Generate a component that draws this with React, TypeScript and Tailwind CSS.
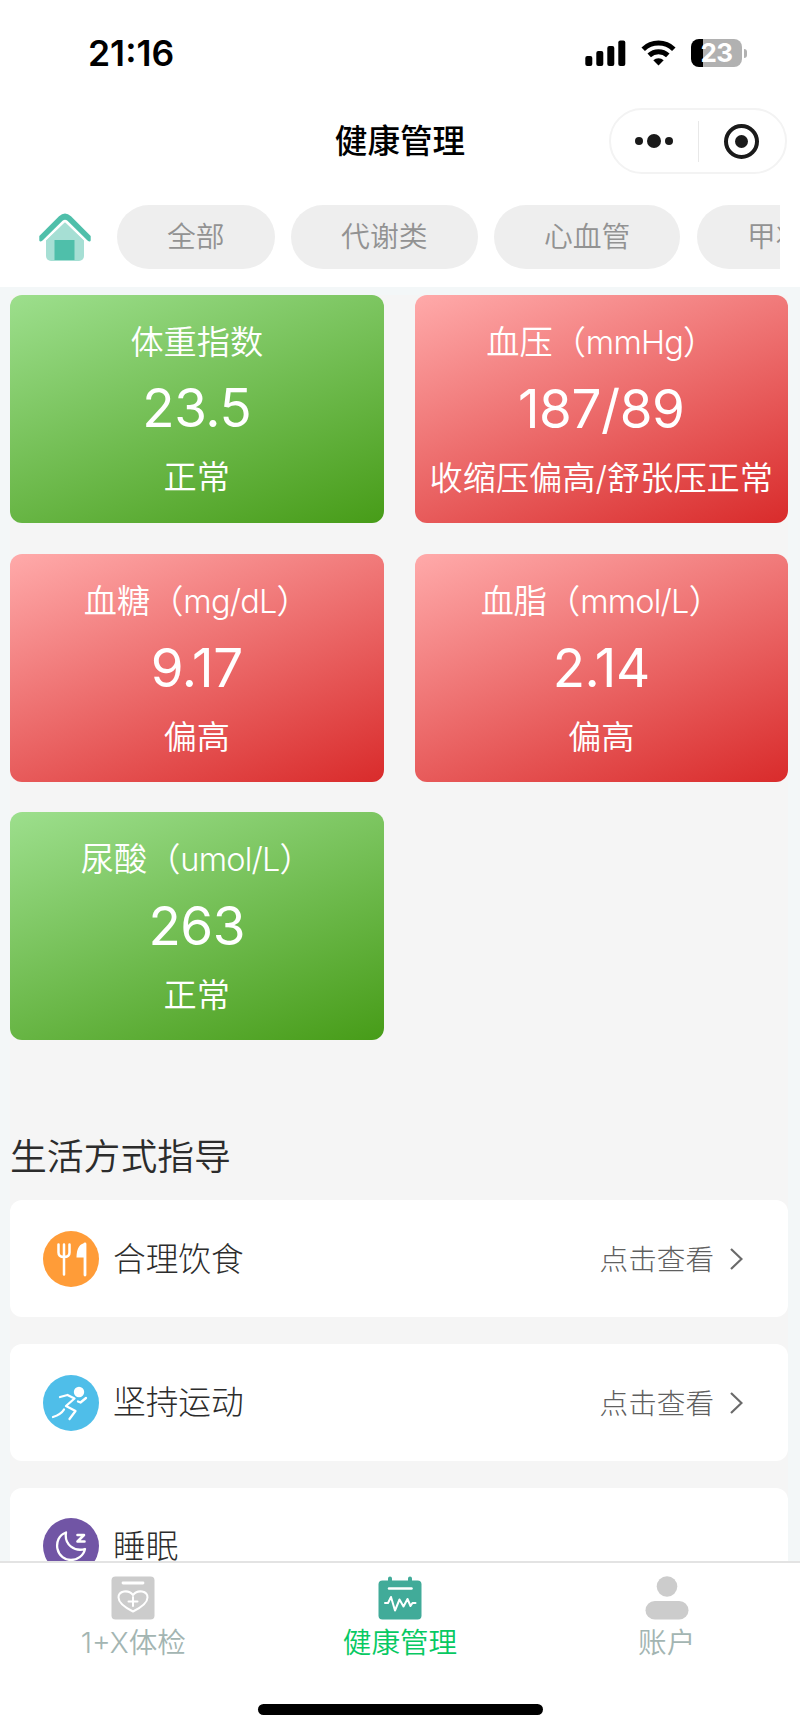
import type { ReactNode } from "react";

const categories = ["全部", "代谢类", "心血管", "甲状腺"];

const metrics = [
  { title: "体重指数", unit: "", value: "23.5", status: "正常", high: false },
  { title: "血压", unit: "mmHg", value: "187/89", status: "收缩压偏高/舒张压正常", high: true },
  { title: "血糖", unit: "mg/dL", value: "9.17", status: "偏高", high: true },
  { title: "血脂", unit: "mmol/L", value: "2.14", status: "偏高", high: true },
  { title: "尿酸", unit: "umol/L", value: "263", status: "正常", high: false },
];

function StatusBar() {
  return (
    <div className="flex h-[106px] items-center justify-between pl-[88px] pr-[53px]">
      <span className="pt-[2px] text-[35.5px] leading-none font-semibold">21:16</span>
      <div className="flex items-center gap-[15px]">
        <svg width="41" height="26" viewBox="0 0 41 26">
          <rect x="0.3" y="16" width="7" height="10" rx="2" />
          <rect x="11.3" y="11" width="7" height="15" rx="2" />
          <rect x="22.3" y="6" width="7" height="20" rx="2" />
          <rect x="33.3" y="0.5" width="7" height="25.5" rx="2" />
        </svg>
        <svg width="35" height="26" viewBox="0 0 35 26" fill="none" stroke="#000" strokeWidth="5">
          <path d="M2.2 9.2a22 22 0 0 1 30.6 0" />
          <path d="M8.2 15.4a13.4 13.4 0 0 1 18.6 0" />
          <path d="M17.5 25.5l-5.2-5.2a7.4 7.4 0 0 1 10.4 0z" fill="#000" stroke="none" />
        </svg>
        <div className="flex items-center gap-[2px]">
          <div className="flex h-7 w-[51px] items-center justify-center rounded-[8px] bg-linear-to-r from-black from-[23%] to-[#b1b1b1] to-[23%] text-[26px] leading-none font-bold tracking-[-0.5px] text-white">
            23
          </div>
          <div className="h-[9px] w-[3px] rounded-r-full bg-[#b1b1b1]" />
        </div>
      </div>
    </div>
  );
}

function NavBar() {
  return (
    <div className="grid h-[70px] grid-cols-[1fr_auto_1fr] items-center pr-[13px]">
      <div />
      <h1 className="pl-[13px] text-[32.6px] leading-none font-medium">健康管理</h1>
      <div className="flex h-[66px] w-[178px] items-center justify-self-end rounded-full border-2 border-[#f3f3f3]">
        <div className="flex flex-1 items-center justify-center gap-1">
          <i className="size-2 rounded-full bg-[#1a1a1a]" />
          <i className="size-[14px] rounded-full bg-[#1a1a1a]" />
          <i className="size-2 rounded-full bg-[#1a1a1a]" />
        </div>
        <div className="h-[41px] w-px bg-[#e8e8e8]" />
        <div className="flex flex-1 items-center justify-center">
          <div className="flex size-[35px] items-center justify-center rounded-full border-4 border-[#1a1a1a]">
            <i className="size-[13px] rounded-full bg-[#1a1a1a]" />
          </div>
        </div>
      </div>
    </div>
  );
}

function HomeIcon() {
  return (
    <svg className="shrink-0" width="52" height="50" viewBox="0 0 52 50">
      <path d="M26 10L45 28V44a5 5 0 0 1-5 5H12a5 5 0 0 1-5-5V28z" fill="#a6dfd4" />
      <path d="M2 25.5L20.5 7.5Q26 2 31.5 7.5L50 25.5" fill="none" stroke="#fff" strokeWidth="11" />
      <path d="M0.3 24L20 4.2Q26-1 32 4.2L51.7 24V28.5Q51 30.5 48.5 28.5L28.5 8.8Q26 6.6 23.5 8.8L3.5 28.5Q1 30.5 0.3 28.5z" fill="#4fbfaa" />
      <rect x="15.5" y="28" width="20" height="20" fill="#4fbfaa" />
    </svg>
  );
}

function CategoryBar() {
  return (
    <div className="flex h-[111px] items-center pt-[10px] pr-[20px] pl-[39px]">
      <HomeIcon />
      <div className="ml-[26px] flex flex-1 gap-[16.5px] overflow-hidden">
        {categories.map((name) => (
          <button key={name} className="h-16 shrink-0 rounded-full bg-[#eeeeee] px-[50px] pt-[1px] text-[28.8px] leading-none font-[350] text-[#929292]">
            {name}
          </button>
        ))}
      </div>
    </div>
  );
}

function MetricCard({ title, unit, value, status, high }: (typeof metrics)[number]) {
  const tone = high ? "from-[#ffaaaa] to-[#d92b2b]" : "from-[#9ddf8d] to-[#479c18]";
  return (
    <div className={`flex h-[228px] flex-col items-center rounded-xl bg-linear-[160deg] pt-[27px] font-[350] whitespace-nowrap text-white ${tone}`}>
      <div className="text-[33.2px] leading-[40px]">
        {title}
        {unit && (
          <>
            （<span className="text-[32.5px] font-[350] tracking-[-0.8px]">{unit}</span>）
          </>
        )}
      </div>
      <div className="mt-[14px] text-[53px] leading-[64px] font-normal tracking-[-0.4px]">{value}</div>
      <div className="mt-[17px] text-[33.2px] leading-[40px]">{status}</div>
    </div>
  );
}

function DietIcon() {
  return (
    <svg width="56" height="56" viewBox="0 0 56 56" fill="none" stroke="#fff" strokeLinecap="round">
      <circle cx="28" cy="28" r="28" fill="#ff9c38" stroke="none" />
      <path d="M15.5 13.5v8q0 4.500 5.500 4.500t5.500-4.500v-8M21 13.500V43.500" strokeWidth="2.5" />
      <path d="M42 13v31" strokeWidth="2.8" />
      <path d="M43 12c-6 0-9.500 5-9.500 14.500H43z" fill="#fff" stroke="none" />
    </svg>
  );
}

function RunIcon() {
  return (
    <svg width="56" height="56" viewBox="0 0 56 56" fill="none" stroke="#fff" strokeWidth="2.3" strokeLinecap="round" strokeLinejoin="round">
      <circle cx="28" cy="28" r="28" fill="#4fbee9" stroke="none" />
      <circle cx="36" cy="17" r="5.2" fill="#fff" stroke="none" />
      <path d="M17 22l7.500-2 7 3.500-8.500 7.500 9.500 5-6 8" />
      <path d="M21 34.500q-3 5-11 7.500M35 26.500l2.500 1 5.500-4.500" />
    </svg>
  );
}

function SleepIcon() {
  return (
    <svg width="56" height="56" viewBox="0 0 56 56" fill="none" stroke="#fff" strokeLinecap="round" strokeLinejoin="round">
      <circle cx="28" cy="28" r="28" fill="#7155a5" stroke="none" />
      <path d="M23 14.500C16 17 13 24 14.500 31 16 38 22 42 28 42s12.500-4 14-11C32 34 21 27 23 14.500z" strokeWidth="2.3" />
      <path d="M34.500 17h6.500l-6.500 6.500h7" strokeWidth="2.6" />
    </svg>
  );
}

function GuideRow({ icon, label, link }: { icon: ReactNode; label: string; link?: string }) {
  return (
    <div className="flex h-[117px] shrink-0 items-center rounded-xl bg-white pr-[45px] pl-[33px] font-light">
      {icon}
      <span className="ml-[14px] text-[32.7px] leading-none text-[#2c2c2c]">{label}</span>
      {link && (
        <>
          <span className="ml-auto pt-[3px] text-[28.6px] leading-none text-[#5f5f5f]">{link}</span>
          <svg className="ml-4" width="13" height="22" viewBox="0 0 13 22" fill="none" stroke="#6a6a6a" strokeWidth="2.2">
            <path d="M1 1l10.500 10L1 21" />
          </svg>
        </>
      )}
    </div>
  );
}

function CheckupIcon() {
  return (
    <svg width="44" height="44" viewBox="0 0 44 44" fill="none" stroke="#fff" strokeLinecap="round" strokeLinejoin="round">
      <rect x="0.5" y="0.5" width="43" height="43" rx="4" fill="#ccc" stroke="none" />
      <path d="M12 7h20" strokeWidth="2.8" />
      <path d="M22 35.500C14 31.500 7.500 26.500 7.500 21.500c0-6.500 9.500-8.500 14.500-2.500 5-6 14.500-4 14.500 2.500 0 5-6.500 10-14.500 14z" strokeWidth="2" />
      <path d="M17.500 25.500h9M22 21v9" strokeWidth="2" />
    </svg>
  );
}

function HealthIcon() {
  return (
    <svg width="44" height="44" viewBox="0 0 44 44" fill="none" stroke="#fff" strokeLinecap="round" strokeLinejoin="round">
      <rect x="0.5" y="4.5" width="43" height="39" rx="4" fill="#41ab99" stroke="none" />
      <path d="M12 2.500v4M32 2.500v4" stroke="#41ab99" strokeWidth="4" />
      <path d="M11 12.500h22.500" strokeWidth="2.5" />
      <path d="M7 27h3l3-6 4 13.500 4.500-11 4 7 4-7.500 3 7 2-3h3" strokeWidth="2" />
    </svg>
  );
}

function AccountIcon() {
  return (
    <svg width="44" height="44" viewBox="0 0 44 44" fill="#ccc">
      <circle cx="22" cy="10.5" r="10.3" />
      <rect x="0.5" y="25" width="43" height="18.5" rx="9.25" />
    </svg>
  );
}

function TabItem({ icon, label, active }: { icon: ReactNode; label: string; active?: boolean }) {
  return (
    <div className={`flex flex-1 flex-col items-center pt-[13px] ${active ? "text-[#07c962]" : "text-[#a3b5b2]"}`}>
      {icon}
      <span className="mt-[5px] text-[28.6px] leading-[36px] font-[350]">{label}</span>
    </div>
  );
}

export default function App() {
  return (
    <div className="flex h-[1731px] w-[800px] flex-col overflow-hidden bg-[#f3f7f8] font-['Inter','Noto_Sans_CJK_SC',sans-serif] text-black">
      <header className="h-[287px] shrink-0 bg-white">
        <StatusBar />
        <NavBar />
        <CategoryBar />
      </header>

      <main className="mt-2 mr-[12px] ml-[10px] flex min-h-0 flex-1 flex-col overflow-hidden bg-[#f5f5f5]">
        <div className="grid shrink-0 grid-cols-2 gap-x-[31px] gap-y-[30.7px]">
          {metrics.map((m) => (
            <MetricCard key={m.title} {...m} />
          ))}
        </div>

        <h2 className="mt-[92px] shrink-0 text-[36.8px] leading-[50px] font-[350] text-[#2c2c2c]">生活方式指导</h2>
        <div className="mt-[18px] flex shrink-0 flex-col gap-[26.7px]">
          <GuideRow icon={<DietIcon />} label="合理饮食" link="点击查看" />
          <GuideRow icon={<RunIcon />} label="坚持运动" link="点击查看" />
          <GuideRow icon={<SleepIcon />} label="睡眠" />
        </div>
      </main>

      <nav className="flex h-[170px] shrink-0 flex-col items-center justify-between border-t-2 border-[#e3e3e3] bg-white pb-4">
        <div className="flex w-full">
          <TabItem icon={<CheckupIcon />} label="1+X体检" />
          <TabItem icon={<HealthIcon />} label="健康管理" active />
          <TabItem icon={<AccountIcon />} label="账户" />
        </div>
        <div className="h-[11px] w-[285px] rounded-full bg-black" />
      </nav>
    </div>
  );
}
